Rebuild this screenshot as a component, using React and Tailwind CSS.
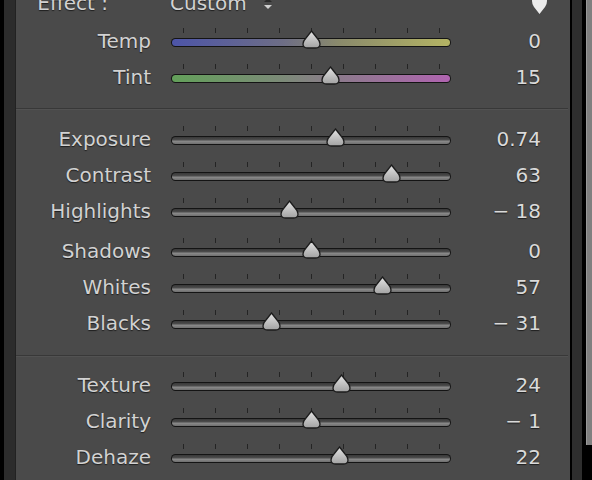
import React from 'react';

const font = { fontFamily: '"DejaVu Sans", "Liberation Sans", sans-serif' };

const groups = [
    [
        { label: 'Temp', value: '0', pos: 140, track: 'temp' },
        { label: 'Tint', value: '15', pos: 159, track: 'tint' },
    ],
    [
        { label: 'Exposure', value: '0.74', pos: 164 },
        { label: 'Contrast', value: '63', pos: 220 },
        { label: 'Highlights', value: '− 18', pos: 118 },
        { label: 'Shadows', value: '0', pos: 140, gap: true },
        { label: 'Whites', value: '57', pos: 211 },
        { label: 'Blacks', value: '− 31', pos: 100 },
    ],
    [
        { label: 'Texture', value: '24', pos: 170 },
        { label: 'Clarity', value: '− 1', pos: 140 },
        { label: 'Dehaze', value: '22', pos: 168 },
    ],
];

const trackFill = {
    temp: 'bg-[linear-gradient(to_right,#4d55a8,#6e6e86_40%,#8a8a6c_60%,#b4b464)]',
    tint: 'bg-[linear-gradient(to_right,#63a05a,#7c8a78_40%,#8c7a8c_60%,#b064b0)]',
    plain: 'bg-[linear-gradient(to_bottom,#383838,#4c4c4c_40%,#8a8a8a_60%,#6e6e6e)]',
};

const Thumb = () => (
    <svg width="19" height="19" viewBox="0 0 19 19">
        <defs>
            <linearGradient id="th" x1="0" y1="0" x2="0" y2="1">
                <stop offset="0" stopColor="#e4e4e4" />
                <stop offset="1" stopColor="#a2a2a2" />
            </linearGradient>
        </defs>
        <path
            d="M9.5 1 L15 8 Q18 11 18 14 Q18 18 13.5 18 L5.5 18 Q1 18 1 14 Q1 11 4 8 Z"
            fill="url(#th)"
            stroke="#1c1c1c"
            strokeWidth="1.3"
        />
    </svg>
);

const Slider = ({ pos, track = 'plain' }) => (
    <div className="relative w-[280px] h-[28px] flex flex-col">
        <div className="mt-[1px] h-[5px] flex justify-between px-[11.5px]">
            {Array.from({ length: 9 }).map((_, i) => (
                <div key={i} className="w-[1px] h-[5px] bg-[#242424]" />
            ))}
        </div>
        <div className="mt-[5px] h-[9px] rounded-full bg-[#141414] p-[1px]">
            <div className={`h-full rounded-full ${trackFill[track]}`} />
        </div>
        <div className="absolute top-[3px]" style={{ left: pos - 9 }}>
            <Thumb />
        </div>
    </div>
);

const Row = ({ label, value, pos, track, gap }) => (
    <div className={`flex items-center h-[36px] ${gap ? 'mt-[4px]' : ''}`}>
        <div className="w-[135px] text-right text-[20px] text-[#d2d2d2] [text-shadow:0_1px_1px_#1e1e1e]" style={font}>
            {label}
        </div>
        <div className="ml-[20px]">
            <Slider pos={pos} track={track} />
        </div>
        <div className="w-[90px] text-right text-[20px] text-[#dadada] [text-shadow:0_1px_1px_#1e1e1e]" style={font}>
            {value}
        </div>
    </div>
);

const Separator = () => (
    <div className="mr-[2px] h-[2px] border-t border-[#383838] border-b border-b-[#525252]" />
);

export default function App() {
    return (
        <div className="w-[592px] h-[480px] overflow-hidden flex bg-black">
            <div className="w-[4px] bg-black" />
            <div className="w-[11px] bg-[#2c2c2c]" />
            <div className="w-[1px] bg-[#222]" />

            <div className="flex-1 bg-[#4a4a4a] flex flex-col">
                <div className="-mt-[15px] h-[36px] flex items-center relative">
                    <div className="w-[92px] text-right text-[20px] text-[#d2d2d2] [text-shadow:0_1px_1px_#1e1e1e]" style={font}>
                        Effect :
                    </div>
                    <div className="ml-[62px] text-[20px] text-[#d2d2d2] [text-shadow:0_1px_1px_#1e1e1e]" style={font}>
                        Custom
                    </div>
                    <svg className="ml-[16px] mt-[2px]" width="10" height="14" viewBox="0 0 10 14">
                        <path d="M1 5 L5 1 L9 5 Z" fill="#2a2a2a" />
                        <path d="M1 8 L5 12 L9 8 Z" fill="#d0d0d0" />
                    </svg>
                    <svg className="absolute left-[515px] top-[10px]" width="17" height="20" viewBox="0 0 17 20">
                        <path
                            d="M8.5 19 L14 12 Q16 9.5 16 6 Q16 1 12 1 L5 1 Q1 1 1 6 Q1 9.5 3 12 Z"
                            fill="#ececec"
                        />
                    </svg>
                </div>

                <div className="mt-[2px]">
                    {groups[0].map((r) => <Row key={r.label} {...r} />)}
                </div>

                <div className="mt-[13px]"><Separator /></div>

                <div className="mt-[11px]">
                    {groups[1].map((r) => <Row key={r.label} {...r} />)}
                </div>

                <div className="mt-[14px]"><Separator /></div>

                <div className="mt-[10px]">
                    {groups[2].map((r) => <Row key={r.label} {...r} />)}
                </div>
            </div>

            <div className="w-[2px] bg-black" />
            <div className="w-[10px] bg-[#2e2e2e]" />
            <div className="w-[4px] bg-black" />
            <div className="w-[6px] flex flex-col">
                <div className="h-[445px] bg-[#808080] border-l border-[#999]" />
                <div className="flex-1 bg-black" />
            </div>
        </div>
    );
}
